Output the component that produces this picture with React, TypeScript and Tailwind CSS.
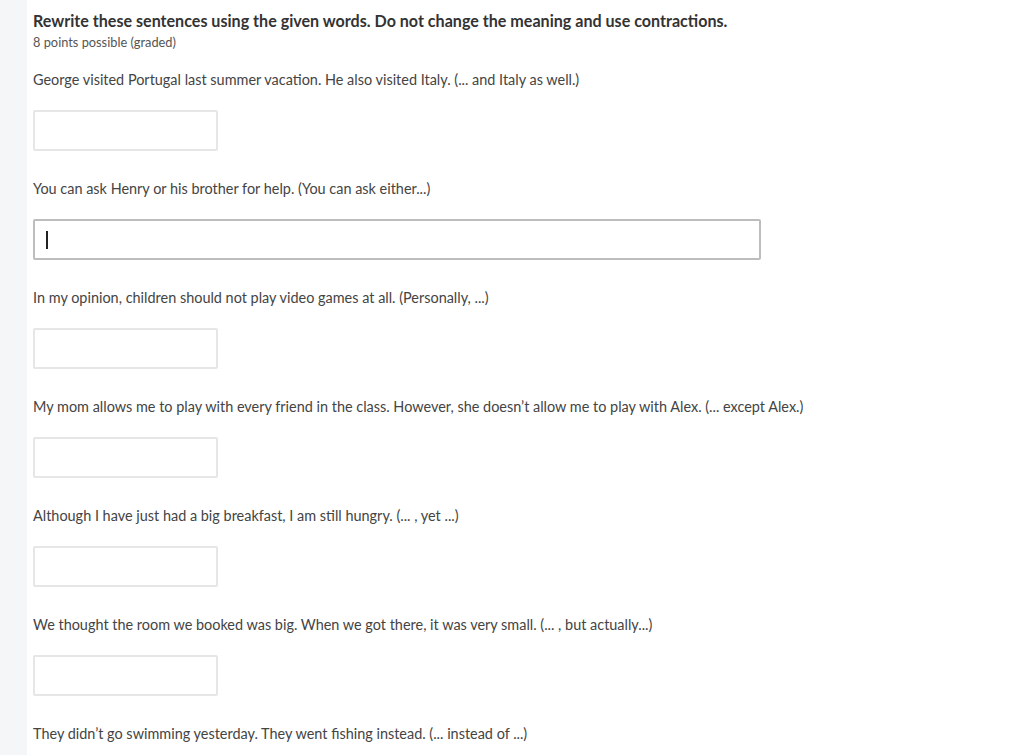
import React from "react";

const questions = [
  "George visited Portugal last summer vacation. He also visited Italy. (... and Italy as well.)",
  "You can ask Henry or his brother for help. (You can ask either...)",
  "In my opinion, children should not play video games at all. (Personally, ...)",
  "My mom allows me to play with every friend in the class. However, she doesn\u2019t allow me to play with Alex. (... except Alex.)",
  "Although I have just had a big breakfast, I am still hungry. (... , yet ...)",
  "We thought the room we booked was big. When we got there, it was very small. (... , but actually...)",
  "They didn\u2019t go swimming yesterday. They went fishing instead. (... instead of ...)",
];

export default function App() {
  return (
    <div
      className="flex w-[1024px] h-[755px] overflow-hidden bg-white"
      style={{ fontFamily: "Lato, 'Open Sans', sans-serif" }}
    >
      <div className="w-[27px] shrink-0 bg-[#f5f6f8]" />
      <div className="flex-1 pl-[6px] pt-[10px]">
        <h2 className="text-[16.1px] leading-[22px] font-bold text-[#333]">
          Rewrite these sentences using the given words. Do not change the meaning and use contractions.
        </h2>
        <div className="mt-[2px] text-[12.8px] leading-[16px] text-[#555]">8 points possible (graded)</div>
        <div className="mt-[20px] flex flex-col">
          {questions.map((q, i) => (
            <div key={i} className="flex flex-col">
              <p className="text-[14.45px] leading-[20px] text-[#444]">{q}</p>
              {i < questions.length - 1 && (
                i === 1 ? (
                  <div className="mt-[20px] mb-[28px] h-[41px] w-[728px] border-2 border-[#bdbdbd] rounded-[2px] bg-white flex items-center pl-[11px]">
                    <span className="block w-[2px] h-[18px] bg-[#222]" />
                  </div>
                ) : (
                  <div className="mt-[20px] mb-[28px] h-[41px] w-[185px] border-2 border-[#e6e6e6] rounded-[2px] bg-white" />
                )
              )}
            </div>
          ))}
        </div>
      </div>
    </div>
  );
}
